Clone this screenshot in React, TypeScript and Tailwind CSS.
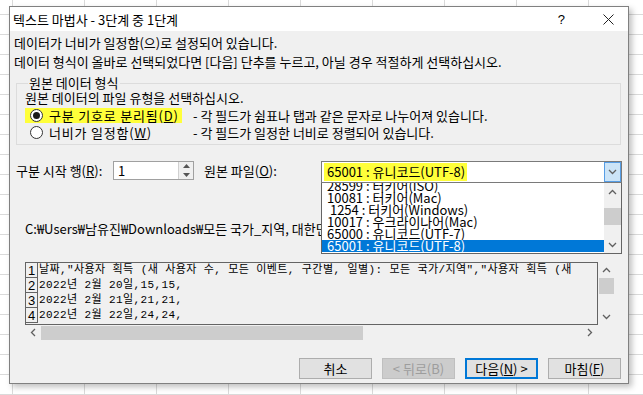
import React from 'react';

const encodings = [
  '28599 : 터키어(ISO)',
  '10081 : 터키어(Mac)',
  ' 1254 : 터키어(Windows)',
  '10017 : 우크라이나어(Mac)',
  '65000 : 유니코드(UTF-7)',
];

const previewRows = [
  '날짜,"사용자 획득 (새 사용자 수, 모든 이벤트, 구간별, 일별): 모든 국가/지역","사용자 획득 (새',
  '2022년 2월 20일,15,15,',
  '2022년 2월 21일,21,21,',
  '2022년 2월 22일,24,24,',
];

function Radio({ checked }: { checked?: boolean }) {
  return (
    <span className="w-[13px] h-[13px] rounded-full border border-[#333] bg-white flex items-center justify-center shrink-0">
      {checked && <span className="w-[7px] h-[7px] rounded-full bg-[#1a1a1a]" />}
    </span>
  );
}

function Chevron({ up }: { up?: boolean }) {
  return (
    <svg width="9" height="6" viewBox="0 0 9 6" className={up ? 'rotate-180' : ''}>
      <path d="M1 1l3.5 3.5L8 1" fill="none" stroke="#606060" strokeWidth="1.3" />
    </svg>
  );
}

function Button({ children, primary, disabled }: { children: React.ReactNode; primary?: boolean; disabled?: boolean }) {
  return (
    <div
      className={
        'w-[73px] h-[21px] flex items-center justify-center text-[13px] leading-none ' +
        (disabled
          ? 'bg-[#cccccc] border border-[#bfbfbf] text-[#9d9d9d]'
          : primary
          ? 'bg-[#e1e1e1] border-2 border-[#0078d7] text-black'
          : 'bg-[#e1e1e1] border border-[#adadad] text-black')
      }
    >
      {children}
    </div>
  );
}

export default function App() {
  return (
    <div className="w-[643px] h-[395px] overflow-hidden bg-white bg-[linear-gradient(#dadada_1px,transparent_1px),linear-gradient(90deg,#dadada_1px,transparent_1px)] bg-[size:72px_20px] bg-[position:12px_14px] pt-[6px] pl-[9px] font-['Noto_Sans_CJK_KR','Liberation_Sans',sans-serif] text-[13px] text-black">
      <div className="w-[620px] h-[378px] border border-[#808080] bg-[#f0f0f0] shadow-[3px_3px_6px_rgba(0,0,0,0.25)] flex flex-col">
        {/* title bar */}
        <div className="h-[24px] bg-white flex items-center pl-[3px] shrink-0">
          <span className="leading-none">텍스트 마법사 - 3단계 중 1단계</span>
          <span className="ml-auto mr-[38px] text-[13px] leading-none font-['Liberation_Sans',sans-serif]">?</span>
          <svg width="11" height="11" viewBox="0 0 11 11" className="mr-[14px]">
            <path d="M0.5 0.5l10 10M10.5 0.5l-10 10" stroke="#222" strokeWidth="1" />
          </svg>
        </div>

        <div className="flex flex-col px-[4px]">
          <div className="h-[16px] mt-[4px] leading-[16px]">데이터가 너비가 일정함(으)로 설정되어 있습니다.</div>
          <div className="h-[16px] mt-[3px] leading-[16px]">데이터 형식이 올바로 선택되었다면 [다음] 단추를 누르고, 아닐 경우 적절하게 선택하십시오.</div>

          <fieldset className="mt-[5px] ml-[2px] w-[605px] h-[70px] border border-[#dcdcdc] pl-[8px]">
            <legend className="ml-[3px] px-[1px] leading-[16px] h-[16px]">원본 데이터 형식</legend>
            <div className="h-[16px] leading-[16px] -mt-[1px]">원본 데이터의 파일 유형을 선택하십시오.</div>
            <div className="flex items-center h-[16px] mt-[1px]">
              <div className="w-[168px] flex items-center">
                <div className="bg-[#ffff3a] h-[15px] flex items-center pl-[5px] pr-[3px] gap-[6px]">
                  <Radio checked />
                  <span className="leading-none tracking-[0.8px]">
                    구분 기호로 분리됨(<span className="underline">D</span>)
                  </span>
                </div>
              </div>
              <span className="leading-none">- 각 필드가 쉼표나 탭과 같은 문자로 나누어져 있습니다.</span>
            </div>
            <div className="flex items-center h-[16px] mt-[1px]">
              <div className="w-[168px] flex items-center pl-[5px] gap-[6px]">
                <Radio />
                <span className="leading-none tracking-[0.8px]">
                  너비가 일정함(<span className="underline">W</span>)
                </span>
              </div>
              <span className="leading-none">- 각 필드가 일정한 너비로 정렬되어 있습니다.</span>
            </div>
          </fieldset>

          {/* start row + origin */}
          <div className="flex items-start mt-[16px] ml-[2px] relative z-10">
            <span className="h-[20px] leading-[20px] w-[97px] whitespace-nowrap">
              구분 시작 행(<span className="underline">R</span>):
            </span>
            <div className="w-[81px] h-[19px] border border-[#a0a0a0] bg-white flex">
              <span className="flex-1 pl-[4px] leading-[17px]">1</span>
              <div className="w-[15px] flex flex-col border-l border-[#d0d0d0] bg-[#f0f0f0]">
                <div className="flex-1 flex items-center justify-center">
                  <svg width="7" height="4" viewBox="0 0 7 4"><path d="M0 4h7L3.5 0z" fill="#555" /></svg>
                </div>
                <div className="flex-1 flex items-center justify-center">
                  <svg width="7" height="4" viewBox="0 0 7 4"><path d="M0 0h7L3.5 4z" fill="#555" /></svg>
                </div>
              </div>
            </div>
            <span className="h-[20px] leading-[20px] ml-[10px] w-[117px]">
              원본 파일(<span className="underline">O</span>):
            </span>
            <div className="relative w-[301px]">
              <div className="h-[22px] border border-[#7a7a7a] bg-white flex items-center">
                <span className="bg-[#ffff3a] h-[18px] leading-[18px] ml-[2px] pl-[3px] pr-[2px]">65001 : 유니코드(UTF-8)</span>
                <div className="ml-auto w-[17px] h-[20px] bg-[#cce4f7] border border-[#569de5] flex items-center justify-center">
                  <Chevron />
                </div>
              </div>
              {/* dropdown list */}
              <div className="absolute left-0 top-[22px] w-[301px] h-[71px] bg-white border border-[#646464] border-t-0 flex overflow-hidden">
                <div className="flex-1 flex flex-col justify-end pl-[5px] leading-[12px] text-[13px]">
                  {encodings.map((e) => (
                    <div key={e} className="h-[12px] whitespace-pre">{e}</div>
                  ))}
                  <div className="h-[12px] whitespace-pre bg-[#0078d7] text-white -ml-[5px] pl-[5px] mb-[1px]">65001 : 유니코드(UTF-8)</div>
                </div>
                <div className="w-[17px] bg-[#f0f0f0] flex flex-col items-center">
                  <div className="h-[17px] flex items-center justify-center"><Chevron up /></div>
                  <div className="flex-1 w-full flex flex-col justify-center pb-[4px]">
                    <div className="h-[17px] w-full bg-[#cdcdcd] mx-auto" />
                  </div>
                  <div className="h-[17px] flex items-center justify-center"><Chevron /></div>
                </div>
              </div>
            </div>
          </div>

          <div className="mt-[38px] ml-[11px] w-[296px] overflow-hidden h-[16px] leading-[16px] whitespace-nowrap">C:₩Users₩남유진₩Downloads₩모든 국가_지역, 대한민국.csv</div>

          {/* preview */}
          <div className="mt-[25px] ml-[11px] grid grid-cols-[573px_16px] grid-rows-[63px_15px] w-[589px]">
            <div className="border border-[#646464] bg-[#f0f0f0] overflow-hidden flex flex-col font-['Liberation_Mono','Noto_Sans_CJK_KR',monospace] text-[11px] tracking-[0.4px]">
              {previewRows.map((r, i) => (
                <div key={i} className="flex h-[15px] shrink-0">
                  <div className="w-[12px] border-r border-b border-[#646464] flex items-center justify-center text-[13px] leading-none tracking-normal font-['Liberation_Sans',sans-serif]">{i + 1}</div>
                  <div className="pl-[1px] whitespace-pre leading-[15px]">{r}</div>
                </div>
              ))}
            </div>
            <div className="bg-[#f0f0f0] flex flex-col items-center ml-[1px]">
              <div className="h-[16px] flex items-center"><Chevron up /></div>
              <div className="h-[16px] w-[15px] bg-[#cdcdcd]" />
              <div className="flex-1" />
              <div className="h-[16px] flex items-center"><Chevron /></div>
            </div>
            <div className="bg-[#f0f0f0] flex items-center">
              <div className="w-[16px] flex justify-center">
                <svg width="6" height="9" viewBox="0 0 6 9"><path d="M5 1L1.5 4.5 5 8" fill="none" stroke="#606060" strokeWidth="1.3" /></svg>
              </div>
              <div className="w-[322px] h-[14px] bg-[#cdcdcd]" />
              <div className="flex-1" />
              <div className="w-[16px] flex justify-center">
                <svg width="6" height="9" viewBox="0 0 6 9"><path d="M1 1l3.5 3.5L1 8" fill="none" stroke="#606060" strokeWidth="1.3" /></svg>
              </div>
            </div>
            <div className="bg-[#f0f0f0]" />
          </div>

          {/* buttons */}
          <div className="flex justify-end gap-[10px] mt-[18px] mr-[3px]">
            <Button>취소</Button>
            <Button disabled>&lt; 뒤로(B)</Button>
            <Button primary>
              다음(<span className="underline">N</span>) &gt;
            </Button>
            <Button>
              마침(<span className="underline">F</span>)
            </Button>
          </div>
        </div>
      </div>
    </div>
  );
}
